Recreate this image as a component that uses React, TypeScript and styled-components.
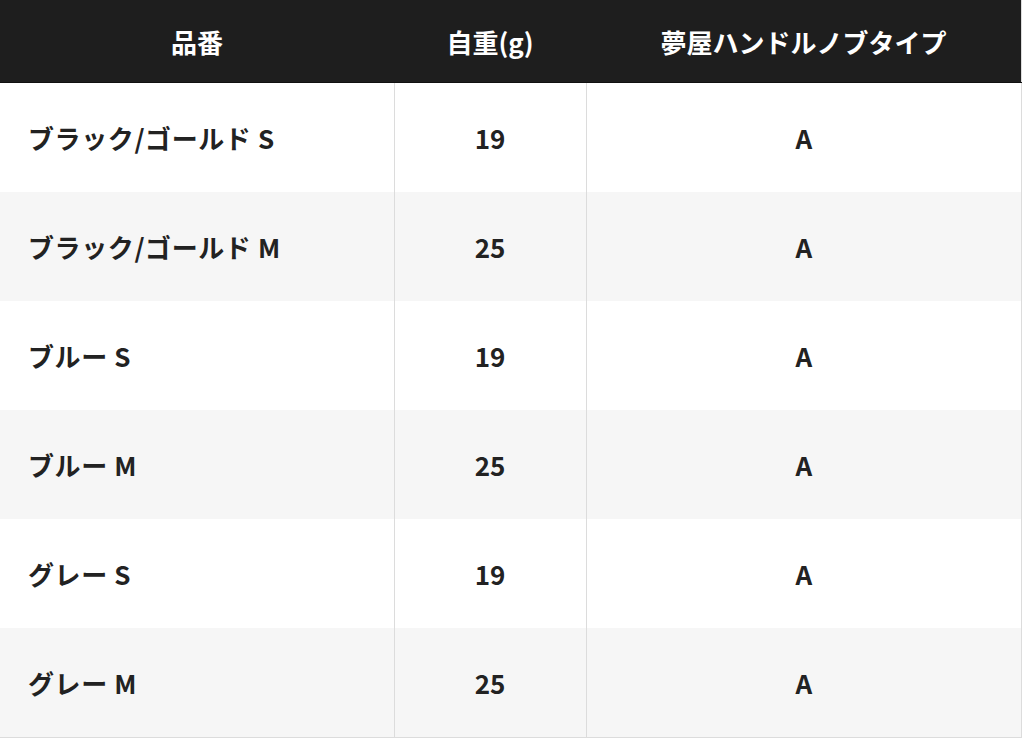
import React from "react";
import styled, { createGlobalStyle } from "styled-components";

const Global = createGlobalStyle`
  html, body { margin: 0; padding: 0; background: #fff; }
  body { font-family: "Noto Sans CJK JP", "Noto Sans", sans-serif; }
`;

const Table = styled.table`
  width: 1021px;
  border-collapse: collapse;
  table-layout: fixed;
  border-right: 1px solid #dcdcdc;
  border-bottom: 1px solid #dcdcdc;
`;

const HeadCell = styled.th<{ $w: number }>`
  width: ${(p) => p.$w}px;
  height: 82px;
  padding: 0;
  background: #1e1e1e;
  color: #fff;
  font-size: 26px;
  font-weight: 700;
  text-align: center;
  border-bottom: 1px solid #111;
`;

const Row = styled.tr<{ $alt: boolean }>`
  background: ${(p) => (p.$alt ? "#f6f6f6" : "#ffffff")};
`;

const Cell = styled.td<{ $left?: boolean }>`
  height: 109px;
  padding: 0;
  padding-left: ${(p) => (p.$left ? "28px" : "0")};
  text-align: ${(p) => (p.$left ? "left" : "center")};
  font-size: 26px;
  font-weight: 700;
  color: #222;
  letter-spacing: ${(p) => (p.$left ? "0.6px" : "0")};
  border-left: 1px solid #dcdcdc;
  &:first-child { border-left: none; }
`;

const rows = [
  ["ブラック/ゴールド S", "19", "A"],
  ["ブラック/ゴールド M", "25", "A"],
  ["ブルー S", "19", "A"],
  ["ブルー M", "25", "A"],
  ["グレー S", "19", "A"],
  ["グレー M", "25", "A"],
];

export default function App() {
  return (
    <>
      <Global />
      <Table>
        <thead>
          <tr>
            <HeadCell $w={394}>品番</HeadCell>
            <HeadCell $w={192}>自重(g)</HeadCell>
            <HeadCell $w={435}>夢屋ハンドルノブタイプ</HeadCell>
          </tr>
        </thead>
        <tbody>
          {rows.map((r, i) => (
            <Row key={i} $alt={i % 2 === 1}>
              <Cell $left>{r[0]}</Cell>
              <Cell>{r[1]}</Cell>
              <Cell>{r[2]}</Cell>
            </Row>
          ))}
        </tbody>
      </Table>
    </>
  );
}
